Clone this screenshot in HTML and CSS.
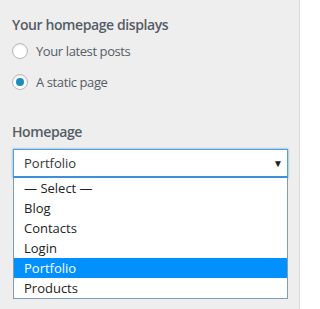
FILE: index.html
```html
<!DOCTYPE html>
<html lang="en">
<head>
    <meta charset="UTF-8">
    <meta name="viewport" content="width=device-width, initial-scale=1.0">
    <title>Homepage settings</title>
    <link rel="stylesheet" href="styles.css">
</head>
<body>
    <div class="panel">
        <h3 class="title">Your homepage displays</h3>
        <ul class="choices">
            <li><span class="radio"></span><span>Your latest posts</span></li>
            <li><span class="radio checked"></span><span>A static page</span></li>
        </ul>
        <h3 class="title second">Homepage</h3>
        <div class="select">
            <div class="current"><span>Portfolio</span><span class="arrow">&#9660;</span></div>
            <ul class="options">
                <li>&mdash; Select &mdash;</li>
                <li>Blog</li>
                <li>Contacts</li>
                <li>Login</li>
                <li class="active">Portfolio</li>
                <li>Products</li>
            </ul>
        </div>
    </div>
</body>
</html>
```

FILE: styles.css
```css
html, body, ul, h3 {
    padding: 0;
    margin: 0;
}
body {
    background: #fff;
    font-family: "Open Sans", "Noto Sans", sans-serif;
    font-size: 13px;
    color: #555d66;
}
.panel {
    box-sizing: border-box;
    width: 300px;
    height: 309px;
    padding: 15px 12px 0 12px;
    background: #eee;
    border-right: 1px solid #ddd;
}
.title {
    font-size: 14px;
    font-weight: 600;
    line-height: 20px;
    letter-spacing: -0.4px;
    color: #555d66;
}
.second {
    margin-top: 32px;
}
.choices {
    list-style: none;
    margin-top: 8px;
    letter-spacing: -0.4px;
}
.choices li {
    display: flex;
    align-items: center;
    gap: 8px;
    height: 16px;
    margin-bottom: 15px;
}
.radio {
    box-sizing: border-box;
    width: 16px;
    height: 16px;
    border-radius: 50%;
    border: 1px solid #b4b9be;
    background: #fff;
    box-shadow: inset 0 1px 2px rgba(0, 0, 0, 0.1);
    display: flex;
    align-items: center;
    justify-content: center;
}
.checked::after {
    content: "";
    width: 8px;
    height: 8px;
    border-radius: 50%;
    background: #1e8cbe;
}
.select {
    margin-top: 7px;
    margin-right: -1px;
    margin-left: 1px;
}
.current {
    box-sizing: border-box;
    height: 29px;
    display: flex;
    align-items: center;
    justify-content: space-between;
    padding: 0 4px 0 10px;
    background: #fff;
    border: 1px solid #5b9dd9;
    border-bottom: 2px solid #3b8fdd;
    box-shadow: 0 0 2px rgba(30, 140, 190, 0.8);
    color: #32373c;
    font-size: 13px;
}
.arrow {
    font-size: 10px;
    color: #222;
}
.options {
    list-style: none;
    background: #fff;
    border: 1px solid #7f9db9;
    border-top: none;
    color: #222;
}
.options li {
    height: 20px;
    line-height: 20px;
    padding-left: 10px;
}
.options .active {
    background: #0090ff;
    color: #fff;
}
```
